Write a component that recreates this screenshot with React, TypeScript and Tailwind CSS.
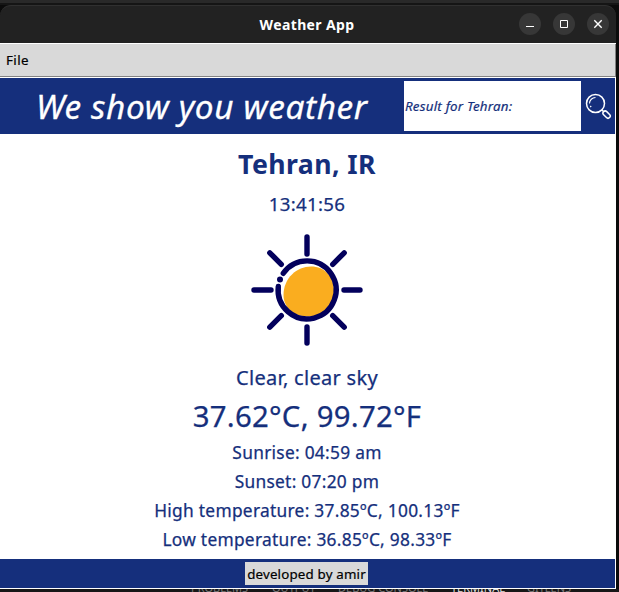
import type { ReactNode } from "react";

function WindowButton({ children }: { children: ReactNode }) {
  return (
    <button className="flex size-[22px] items-center justify-center rounded-full bg-[#373737]">
      <svg width="22" height="22" viewBox="0 0 22 22" fill="none" stroke="#ffffff">
        {children}
      </svg>
    </button>
  );
}

function TitleBar() {
  return (
    <div className="grid h-[38px] shrink-0 grid-cols-[1fr_auto_1fr] items-center rounded-t-[11px] border-t border-[#303030] bg-[#222222] pr-[7px]">
      <span />
      <h1 className="pl-[5px] text-[14px] font-bold leading-none tracking-[0.36px] text-white">Weather App</h1>
      <div className="-mt-px flex justify-end gap-3">
        <WindowButton>
          <path d="M7 13.500h8" />
        </WindowButton>
        <WindowButton>
          <path d="M7.500 7.500h7v7h-7z" />
        </WindowButton>
        <WindowButton>
          <path d="M7.300 7.300l7.400 7.400M14.700 7.300l-7.400 7.400" strokeWidth="1.4" />
        </WindowButton>
      </div>
    </div>
  );
}

function SearchIcon() {
  return (
    <svg width="28" height="28" viewBox="0 0 28 28" fill="none" stroke="#ffffff" strokeWidth="1.5">
      <circle cx="11.500" cy="11.500" r="9" />
      <path d="M5.500 11.500a6 6 0 0 1 6-6" strokeWidth="1.1" />
      <path d="M6.300 14l.8 1" strokeWidth="1.3" />
      <path d="M17.800 17.800l2 2" />
      <rect x="-4.2" y="-2.2" width="8.4" height="4.4" rx="2.2" transform="translate(22.6 22.6) rotate(45)" />
    </svg>
  );
}

function SunIcon() {
  return (
    <svg width="112" height="112" viewBox="0 0 112 112" fill="none" stroke="#03005c" strokeWidth="5.4" strokeLinecap="round">
      <path d="M32.500 61C32.500 44 46 32.500 60 32.500C74 32.500 83 43 83 57C83 71.500 72 82.500 57.500 82.500C43 82.500 32.500 74 32.500 61Z" fill="#faad1f" stroke="none" />
      <path d="M32.300 39.300A29 29 0 1 1 27.300 52.500" />
      <circle cx="29" cy="45.500" r="3" fill="#03005c" stroke="none" />
      <path d="M56 3v17M56 93v16M3 56h17M93 56h16M18.800 18.800l11.500 11.500M93.200 18.800l-11.500 11.500M18.800 93.200l11.500-11.500M93.200 93.200l-11.500-11.500" />
    </svg>
  );
}

export default function App() {
  return (
    <div className="flex h-[592px] w-[619px] flex-col overflow-hidden bg-[#0b0b0b] font-['Noto_Sans',sans-serif]">
      <div className="h-[5px] shrink-0 border-b-2 border-[#151515] bg-[#292929]" />
      <div className="flex h-[584px] w-[616px] shrink-0 flex-col">
        <TitleBar />
        <div className="flex h-[35px] shrink-0 flex-col border-y border-white bg-[#d9d9d9]">
          <div className="flex h-[33px] items-center border-b border-r border-[#828282] pl-[6px] pt-[2px] text-[13.33px] leading-none tracking-[0.4px] text-black [-webkit-text-stroke:0.2px]">
            File
          </div>
        </div>
        <main className="flex h-[511px] flex-col border-b border-r border-white bg-white text-[#152f7c]">
          <header className="flex h-14 shrink-0 items-center bg-[#152f7c]">
            <div className="w-[404px] whitespace-nowrap pl-[36px] text-[33.33px] italic leading-[56px] tracking-[0.62px] text-white [-webkit-text-stroke:0.3px]">
              We show you weather
            </div>
            <div className="flex h-[50px] w-[177px] items-center bg-white pl-px pt-[2px] text-[13.33px] italic tracking-[0.22px] [-webkit-text-stroke:0.2px]">
              Result for Tehran:
            </div>
            <div className="pl-[3px]">
              <SearchIcon />
            </div>
          </header>
          <section className="flex h-[425px] shrink-0 flex-col items-center whitespace-nowrap pr-px [-webkit-text-stroke:0.25px]">
            <h2 className="mt-[11px] text-[26.67px] font-bold leading-[38px] tracking-[0.4px] [-webkit-text-stroke:0px]">Tehran, IR</h2>
            <p className="mt-[7px] text-[18.67px] leading-[28px] tracking-[0.33px]">13:41:56</p>
            <div className="mt-[16px]">
              <SunIcon />
            </div>
            <p className="mt-[18px] text-[20px] leading-[28px] tracking-[0.3px]">Clear, clear sky</p>
            <p className="mt-[4px] text-[29.33px] leading-[40px] tracking-[0.27px]">37.62°C, 99.72°F</p>
            <div className="mt-[2px] text-center text-[17.33px] leading-[29px] tracking-[0.28px]">
              <p>Sunrise: 04:59 am</p>
              <p>Sunset: 07:20 pm</p>
              <p>High temperature: 37.85ºC, 100.13ºF</p>
              <p>Low temperature: 36.85ºC, 98.33ºF</p>
            </div>
          </section>
          <footer className="flex h-[29px] shrink-0 items-center justify-center bg-[#152f7c] pr-[2px]">
            <span className="flex h-[23px] w-[123px] items-center justify-center whitespace-nowrap bg-[#d9d9d9] pt-[2px] text-[13.33px] leading-none tracking-[0.18px] text-black [-webkit-text-stroke:0.2px]">
              developed by amir
            </span>
          </footer>
        </main>
      </div>
      <div className="flex h-[3px] shrink-0 items-end overflow-hidden bg-[#171717] pl-[191px] text-[11px] leading-[9px] text-[#777777]">
        <span className="w-[81px] shrink-0">PROBLEMS</span>
        <span className="w-[66px] shrink-0">OUTPUT</span>
        <span className="w-[113px] shrink-0 whitespace-nowrap">DEBUG CONSOLE</span>
        <span className="w-[76px] shrink-0 text-[#dddddd]">TERMINAL</span>
        <span>GITLENS</span>
      </div>
    </div>
  );
}
